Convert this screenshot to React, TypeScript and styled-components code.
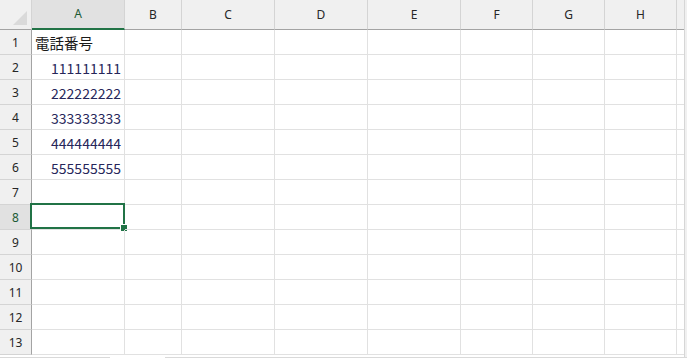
import React from "react";
import styled, { createGlobalStyle } from "styled-components";

const GlobalStyle = createGlobalStyle`
  html, body {
    margin: 0;
    padding: 0;
    background: #ffffff;
    overflow: hidden;
  }
`;

// 列の幅（罫線込み）
const COLUMNS = [
  { name: "A", width: 93 },
  { name: "B", width: 57 },
  { name: "C", width: 93 },
  { name: "D", width: 93 },
  { name: "E", width: 93 },
  { name: "F", width: 72 },
  { name: "G", width: 72 },
  { name: "H", width: 72 },
  { name: "", width: 7 },
];

const ROW_COUNT = 13;
const SELECTED_ROW = 8;

const values: Record<number, string> = {
  1: "電話番号",
  2: "111111111",
  3: "222222222",
  4: "333333333",
  5: "444444444",
  6: "555555555",
};

const GREEN = "#217346";

function App() {
  const template = `32px ${COLUMNS.map((c) => `${c.width}px`).join(" ")}`;
  const rows = Array.from({ length: ROW_COUNT }, (_, i) => i + 1);

  return (
    <>
      <GlobalStyle />
      <Window>
        <Main>
          <Sheet style={{ gridTemplateColumns: template }}>
            <Corner>
              <CornerTriangle />
            </Corner>
            {COLUMNS.map((c, i) => (
              <ColHeader key={i} $selected={c.name === "A"} $last={c.name === ""}>
                {c.name}
              </ColHeader>
            ))}

            {rows.map((r) => (
              <React.Fragment key={r}>
                <RowHeader $selected={r === SELECTED_ROW}>{r}</RowHeader>
                {COLUMNS.map((c, ci) => {
                  const v = c.name === "A" ? values[r] : undefined;
                  const isNumber = v !== undefined && /^\d+$/.test(v);
                  return (
                    <Cell key={ci} $number={isNumber} $last={c.name === ""}>
                      {v}
                      {c.name === "A" && r === SELECTED_ROW && (
                        <Selection>
                          <FillHandle />
                        </Selection>
                      )}
                    </Cell>
                  );
                })}
              </React.Fragment>
            ))}
          </Sheet>
          <VScroll />
        </Main>
        <HScroll>
          <HTrack style={{ width: 110 }} />
          <HGap />
          <HTrack style={{ flex: 1 }} />
        </HScroll>
      </Window>
    </>
  );
}

export default App;

const Window = styled.div`
  display: flex;
  flex-direction: column;
  width: 687px;
  height: 359px;
  overflow: hidden;
  background: #ffffff;
`;

const Main = styled.div`
  display: flex;
  height: 357px;
  overflow: hidden;
`;

const Sheet = styled.div`
  display: grid;
  grid-auto-rows: 25px;
  grid-template-rows: 30px;
  width: 684px;
  flex-shrink: 0;
  align-content: start;
`;

const VScroll = styled.div`
  flex: 1;
  background: #f0f0f0;
  border-left: 1px solid #d6d6d6;
`;

const HScroll = styled.div`
  display: flex;
  height: 2px;
  background: #ffffff;
`;

const HTrack = styled.div`
  height: 1px;
  background: #d9d9d9;
`;

const HGap = styled.div`
  width: 55px;
`;

const Corner = styled.div`
  position: relative;
  box-sizing: border-box;
  background: #f0f0f0;
  border-right: 1px solid #d4d4d4;
  border-bottom: 1px solid #a3a3a3;
`;

const CornerTriangle = styled.div`
  position: absolute;
  right: 4px;
  bottom: 4px;
  width: 0;
  height: 0;
  border-left: 14px solid transparent;
  border-bottom: 14px solid #dadada;
`;

const ColHeader = styled.div<{ $selected?: boolean; $last?: boolean }>`
  display: flex;
  align-items: center;
  justify-content: center;
  box-sizing: border-box;
  padding-bottom: 1px;
  background: ${(p) => (p.$selected ? "#e1e1e1" : "#f0f0f0")};
  border-right: ${(p) => (p.$last ? "none" : "1px solid #d4d4d4")};
  border-bottom: ${(p) => (p.$selected ? `2px solid ${GREEN}` : "1px solid #a3a3a3")};
  color: ${(p) => (p.$selected ? "#1c5a34" : "#262626")};
  font-family: "Noto Sans", "Liberation Sans", sans-serif;
  font-size: 12px;
`;

const RowHeader = styled.div<{ $selected?: boolean }>`
  display: flex;
  align-items: center;
  justify-content: center;
  box-sizing: border-box;
  padding-top: 1px;
  background: ${(p) => (p.$selected ? "#e1e1e1" : "#f0f0f0")};
  border-right: 1px solid #a3a3a3;
  border-bottom: 1px solid #d4d4d4;
  color: ${(p) => (p.$selected ? "#1c5a34" : "#262626")};
  font-family: "Noto Sans", "Liberation Sans", sans-serif;
  font-size: 12px;
`;

const Cell = styled.div<{ $number?: boolean; $last?: boolean }>`
  position: relative;
  display: flex;
  align-items: center;
  justify-content: ${(p) => (p.$number ? "flex-end" : "flex-start")};
  box-sizing: border-box;
  padding: 1px 3px 0 3px;
  border-right: ${(p) => (p.$last ? "none" : "1px solid #e1e1e1")};
  border-bottom: 1px solid #e1e1e1;
  color: ${(p) => (p.$number ? "#26265a" : "#1a1a1a")};
  font-family: "Noto Sans CJK JP", "Noto Sans", sans-serif;
  font-size: ${(p) => (p.$number ? "14px" : "14.5px")};
  white-space: nowrap;
`;

const Selection = styled.div`
  position: absolute;
  top: -2px;
  left: -2px;
  right: -1px;
  bottom: 0;
  border: 2px solid ${GREEN};
  pointer-events: none;
`;

const FillHandle = styled.div`
  position: absolute;
  right: -5px;
  bottom: -5px;
  width: 6px;
  height: 6px;
  background: ${GREEN};
  border: 1px solid #ffffff;
`;
